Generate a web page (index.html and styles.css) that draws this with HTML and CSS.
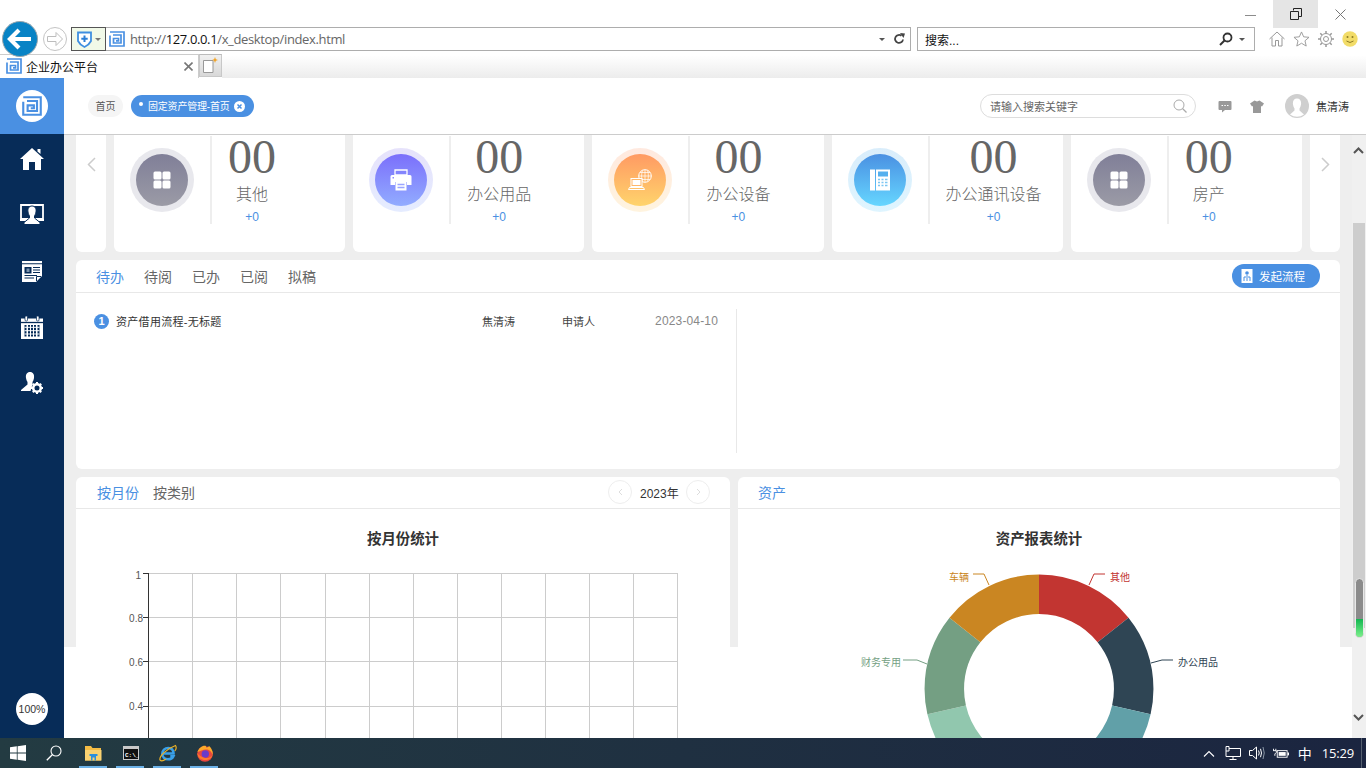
FILE: index.html
```html
<!DOCTYPE html>
<html lang="zh-CN">
<head>
<meta charset="utf-8">
<title>企业办公平台</title>
<link rel="stylesheet" href="styles.css">
</head>
<body>
<svg class="defs" width="0" height="0" aria-hidden="true">
  <symbol id="logo" viewBox="0 0 16 16">
    <path d="M1 1H15V15H1V4.500M4 4H12V12H4.500V7.500H9.500V9.800H7" fill="none" stroke="currentColor" stroke-width="1.700"/>
  </symbol>
  <symbol id="tiles" viewBox="0 0 18 18">
    <rect x="0.500" y="0.500" width="8" height="8" rx="1.500" fill="#fff"/><rect x="9.500" y="0.500" width="8" height="8" rx="1.500" fill="#fff"/>
    <rect x="0.500" y="9.500" width="8" height="8" rx="1.500" fill="#fff"/><rect x="9.500" y="9.500" width="8" height="8" rx="1.500" fill="#fff"/>
  </symbol>
</svg>

<header class="browser">
  <div class="titlebar">
    <div class="winbtn"><svg width="11" height="11" viewBox="0 0 11 11"><path d="M0 6.500H11" stroke="#8c8c8c"/></svg></div>
    <div class="winbtn winbtn-on"><svg width="12" height="12" viewBox="0 0 12 12"><path d="M3.500 2.500V.5H11.500V8.500H9M.5 3.500H8.500V11.500H.5Z" fill="none" stroke="#222"/></svg></div>
    <div class="winbtn"><svg width="11" height="11" viewBox="0 0 11 11"><path d="M.5.5L10.500 10.500M10.500.5L.5 10.500" stroke="#777"/></svg></div>
  </div>
  <div class="addressrow">
    <div class="backbtn"><svg width="26" height="22" viewBox="0 0 26 22"><path d="M12 2L3 11L12 20M4 11H24" fill="none" stroke="#fff" stroke-width="4.200"/></svg></div>
    <div class="fwdbtn"><svg width="18" height="16" viewBox="0 0 18 16"><path d="M10 1.500L16.500 8L10 14.500V10.500H1.500V5.500H10Z" fill="none" stroke="#bdbdbd"/></svg></div>
    <div class="addr">
      <div class="shield">
        <svg width="15" height="17" viewBox="0 0 15 17"><path d="M1 1.500H14V10Q12 14 7.500 16Q3 14 1 10Z" fill="#fff" stroke="#3f8fe0" stroke-width="1.800"/><path d="M7.500 4.500V11M4.300 7.700H10.700" stroke="#2c7fd6" stroke-width="2"/></svg>
        <span class="caret"></span>
      </div>
      <svg class="favicon" width="16" height="16"><use href="#logo"/></svg>
      <span class="url"><span class="url-dim">http://</span>127.0.0.1<span class="url-dim">/x_desktop/index.html</span></span>
      <span class="caret caret-dark addr-caret"></span>
      <svg class="reload" width="12" height="12" viewBox="0 0 12 12"><path d="M10 6.500A4 4 0 1 1 8.500 2.800" fill="none" stroke="#444" stroke-width="1.800"/><path d="M7 0L12 .5L10.500 5Z" fill="#444"/></svg>
    </div>
    <div class="searchbox">
      <span class="searchbox-text">搜索...</span>
      <svg width="14" height="14" viewBox="0 0 14 14"><circle cx="8.500" cy="5.500" r="4" fill="none" stroke="#333" stroke-width="1.800"/><path d="M5.500 8.500L1 13" stroke="#333" stroke-width="2"/></svg>
      <span class="caret caret-dark"></span>
    </div>
    <div class="tools">
      <svg width="16" height="16" viewBox="0 0 16 16"><path d="M.5 8L8 1L15.500 8M3 6.500V15H6.500V9.500H9.500V15H13V6.500" fill="none" stroke="#999"/></svg>
      <svg width="17" height="16" viewBox="0 0 18 17"><path d="M9 1L11.300 6.200L17 6.700L12.700 10.400L14 16L9 13L4 16L5.300 10.400L1 6.700L6.700 6.200Z" fill="none" stroke="#999"/></svg>
      <svg width="16" height="16" viewBox="0 0 16 16"><circle cx="8" cy="8" r="2.500" fill="none" stroke="#999"/><circle cx="8" cy="8" r="5.500" fill="none" stroke="#999" stroke-width="1"/><path d="M8 0V2.500M8 13.500V16M0 8H2.500M13.500 8H16M2.300 2.300L4 4M12 12L13.700 13.700M2.300 13.700L4 12M12 4L13.700 2.300" stroke="#999" stroke-width="1.500"/></svg>
      <svg width="16" height="16" viewBox="0 0 16 16"><circle cx="8" cy="8" r="7.700" fill="#f2dc68"/><circle cx="5.500" cy="6" r="1" fill="#8d7a24"/><circle cx="10.500" cy="6" r="1" fill="#8d7a24"/><path d="M4.500 10Q8 13 11.500 10" fill="none" stroke="#8d7a24"/></svg>
    </div>
  </div>
  <div class="tabrow">
    <div class="tab">
      <svg class="favicon" width="16" height="16"><use href="#logo"/></svg>
      <span class="tab-title">企业办公平台</span>
      <svg class="tab-x" width="9" height="9" viewBox="0 0 9 9"><path d="M.5.5L8.500 8.500M8.500.5L.5 8.500" stroke="#777" stroke-width="1.600"/></svg>
    </div>
    <div class="newtab">
      <svg width="17" height="17" viewBox="0 0 17 17"><path d="M1.500 3.500H11V15.500H1.500Z" fill="#fff" stroke="#999"/><path d="M13 0L13.800 2.200L16 3L13.800 3.800L13 6L12.200 3.800L10 3L12.200 2.200Z" fill="#f0a020"/></svg>
    </div>
    <div class="tabfill"></div>
  </div>
</header>

<div class="app">
  <nav class="sidebar">
    <div class="side-logo"><span class="side-logo-disc"><svg width="20" height="20"><use href="#logo"/></svg></span></div>
    <div class="side-item"><svg width="24" height="22" viewBox="0 0 24 22"><path d="M12 0L24 11H21V22H15V14H9V22H3V11H0Z" fill="#fff"/><path d="M17.500 1H20.500V6L17.500 3.500Z" fill="#fff"/></svg></div>
    <div class="side-item"><svg width="24" height="22" viewBox="0 0 24 22"><path d="M1 1H23V15H1Z" fill="none" stroke="#fff" stroke-width="1.800"/><path d="M0 15H24V17H0Z" fill="#fff"/><path d="M12 2C15 2 16.500 4.500 16 8C15.700 10 15 11 14.500 12V14L20 18.500V20.500H4V18.500L9.500 14V12C9 11 8.300 10 8 8C7.500 4.500 9 2 12 2Z" fill="#fff" stroke="#072c58" stroke-width="1"/></svg></div>
    <div class="side-item"><svg width="20" height="21" viewBox="0 0 20 21"><path d="M0 0H20V15L14 21H0Z" fill="#fff"/><rect x="2.500" y="6" width="7" height="6.500" fill="#072c58"/><rect x="4.500" y="7.500" width="3" height="3.500" fill="#7c93ad"/><path d="M11 6.500H18M11 9H18M11 11.500H18M2.500 14.500H15M2.500 17H12M0 2.800H20" stroke="#072c58" stroke-width="1.100"/><path d="M14.500 20V15.500H19" fill="none" stroke="#072c58"/></svg></div>
    <div class="side-item"><svg width="22" height="23" viewBox="0 0 22 23"><path d="M0 2.500H22V23H0Z" fill="#fff"/><path d="M0 6.500H22" stroke="#072c58" stroke-width="1.300"/><rect x="4" y="0" width="2.500" height="5" rx="1" fill="#fff" stroke="#072c58" stroke-width=".7"/><rect x="15.500" y="0" width="2.500" height="5" rx="1" fill="#fff" stroke="#072c58" stroke-width=".7"/><path d="M4.500 9V20.500M8 9V20.500M11 9V20.500M14 9V20.500M17.500 9V20.500" stroke="#072c58" stroke-width="2"/><path d="M3.500 11.300H18.500M3.500 14.700H18.500M3.500 18H18.500" stroke="#fff" stroke-width="1"/></svg></div>
    <div class="side-item"><svg width="22" height="22" viewBox="0 0 22 22"><path d="M9 0C12 0 13.500 2.500 13 6C12.700 8 12 9 11.500 10V12.500L9.500 19H0V18L6.500 12.500V10C6 9 5.300 8 5 6C4.500 2.500 6 0 9 0Z" fill="#fff"/><circle cx="16" cy="16" r="3.800" fill="none" stroke="#fff" stroke-width="2.600"/><path d="M16 10V12M16 20V22M10 16H12M20 16H22M11.800 11.800L13.200 13.200M18.800 18.800L20.200 20.200M11.800 20.200L13.200 18.800M18.800 13.200L20.200 11.800" stroke="#fff" stroke-width="2"/></svg></div>
    <div class="side-zoom">100%</div>
  </nav>

  <div class="main">
    <div class="header">
      <span class="crumb">首页</span>
      <span class="crumb crumb-on"><i class="crumb-dot"></i><span class="crumb-text">固定资产管理-首页</span><svg class="crumb-x" width="11" height="11" viewBox="0 0 11 11"><circle cx="5.500" cy="5.500" r="5.500" fill="#fff"/><path d="M3.500 3.500L7.500 7.500M7.500 3.500L3.500 7.500" stroke="#4a90e2" stroke-width="1.500"/></svg></span>
      <div class="h-search">
        <span class="h-search-text">请输入搜索关键字</span>
        <svg width="14" height="14" viewBox="0 0 14 14"><circle cx="6" cy="6" r="5" fill="none" stroke="#aaa"/><path d="M9.500 9.500L13.500 13.500" stroke="#aaa" stroke-width="1.200"/></svg>
      </div>
      <svg class="h-icon" width="14" height="13" viewBox="0 0 14 13"><path d="M1.500 1H12.500A1 1 0 0 1 13.500 2V9A1 1 0 0 1 12.500 10H7L4 12.500V10H1.500A1 1 0 0 1 .5 9V2A1 1 0 0 1 1.500 1Z" fill="#999"/><path d="M3.500 5.500H5M6.300 5.500H7.800M9 5.500H10.500" stroke="#fff" stroke-width="1.200"/></svg>
      <svg class="h-icon h-shirt" width="14" height="13" viewBox="0 0 14 13"><path d="M4.500 0.500L7 1.500L9.500 0.500L14 3.500L12 6.500L11 6V13H3V6L2 6.500L0 3.500Z" fill="#999"/></svg>
      <span class="avatar"><svg width="24" height="24" viewBox="0 0 24 24"><circle cx="12" cy="12" r="12" fill="#cfcfcf"/><path d="M12 4.500C15 4.500 16.500 7 16 10.500C15.700 12.500 15 13.500 14.500 14.500V16.500L19 20.500A12 12 0 0 1 5 20.500L9.500 16.500V14.500C9 13.500 8.300 12.500 8 10.500C7.500 7 9 4.500 12 4.500Z" fill="#fff"/></svg></span>
      <span class="h-name">焦清涛</span>
    </div>

    <div class="content">
      <div class="page">
        <section class="cards">
          <div class="card card-edge"><svg width="9" height="15" viewBox="0 0 9 15"><path d="M8 1L1.500 7.500L8 14" fill="none" stroke="#ccc" stroke-width="1.500"/></svg></div>

          <div class="card">
            <div class="ring ring-grey"><div class="disc disc-grey"><svg width="18" height="18"><use href="#tiles"/></svg></div></div>
            <div class="stat"><div class="stat-in"><span class="stat-num">00</span><span class="stat-label">其他</span><span class="stat-inc">+0</span></div></div>
          </div>

          <div class="card">
            <div class="ring ring-purple"><div class="disc disc-purple"><svg width="22" height="22" viewBox="0 0 22 22"><path d="M5 1H17V6H5Z" fill="none" stroke="#fff" stroke-width="1.300"/><path d="M2 6H20A1.500 1.500 0 0 1 21.500 7.500V16H17V13H5V16H.5V7.500A1.500 1.500 0 0 1 2 6Z" fill="#fff"/><path d="M5.500 13H16.500V21.500H5.500Z" fill="#fff"/><path d="M7.500 15.500H14.500M7.500 18.500H14.500" stroke="#9aa5ff" stroke-width="1.300"/><rect x="2.500" y="8" width="1.500" height="1.500" fill="#8f8cff"/></svg></div></div>
            <div class="stat"><div class="stat-in"><span class="stat-num">00</span><span class="stat-label">办公用品</span><span class="stat-inc">+0</span></div></div>
          </div>

          <div class="card">
            <div class="ring ring-orange"><div class="disc disc-orange"><svg width="24" height="22" viewBox="0 0 24 22"><circle cx="17" cy="7" r="6.300" fill="none" stroke="#fff"/><path d="M10.700 7H23.300M17 .7V13.300M12 3.500H22M12 10.500H22M14.500 1.500C13.300 5 13.300 9 14.500 12.500M19.500 1.500C20.700 5 20.700 9 19.500 12.500" fill="none" stroke="#fff" stroke-width=".7"/><rect x="3" y="9.500" width="11" height="8" fill="#ffb76a" stroke="#fff"/><rect x="4.500" y="11" width="8" height="5" fill="#fff"/><path d="M1.500 18.500H15.500L16.500 20.500H.5Z" fill="none" stroke="#fff"/></svg></div></div>
            <div class="stat"><div class="stat-in"><span class="stat-num">00</span><span class="stat-label">办公设备</span><span class="stat-inc">+0</span></div></div>
          </div>

          <div class="card">
            <div class="ring ring-blue"><div class="disc disc-blue"><svg width="20" height="22" viewBox="0 0 20 22"><rect x="0" y="0.500" width="5" height="21" fill="#fff"/><path d="M6 .5H20V21.500H6Z" fill="#fff"/><rect x="8" y="2.500" width="10" height="5" fill="#55b0ee"/><path d="M8 10.500H10M11.500 10.500H13.500M15 10.500H17.500M8 13.500H10M11.500 13.500H13.500M15 13.500H17.500M8 16.500H10M11.500 16.500H13.500M15 16.500H17.500" stroke="#7cc6f2" stroke-width="1.300"/></svg></div></div>
            <div class="stat"><div class="stat-in"><span class="stat-num">00</span><span class="stat-label">办公通讯设备</span><span class="stat-inc">+0</span></div></div>
          </div>

          <div class="card">
            <div class="ring ring-grey"><div class="disc disc-grey"><svg width="18" height="18"><use href="#tiles"/></svg></div></div>
            <div class="stat"><div class="stat-in"><span class="stat-num">00</span><span class="stat-label">房产</span><span class="stat-inc">+0</span></div></div>
          </div>

          <div class="card card-edge"><svg width="9" height="15" viewBox="0 0 9 15"><path d="M1 1L7.500 7.500L1 14" fill="none" stroke="#ccc" stroke-width="1.500"/></svg></div>
        </section>

        <section class="panel panel-tasks">
          <div class="tabs tabs-tasks">
            <span class="tabs-item tabs-on">待办</span><span class="tabs-item">待阅</span><span class="tabs-item">已办</span><span class="tabs-item">已阅</span><span class="tabs-item">拟稿</span>
            <button class="startbtn"><svg width="12" height="14" viewBox="0 0 12 14"><path d="M.5 0H11.500V14H.5Z" fill="#fff"/><circle cx="6" cy="4" r="1.800" fill="#4a90e2"/><path d="M3 12V8H5M6 6V12M9 12V8H7" fill="none" stroke="#4a90e2"/></svg>发起流程</button>
          </div>
          <div class="tasks-body">
            <div class="tasks-col">
              <div class="task">
                <span class="task-no">1</span>
                <span class="task-title">资产借用流程-无标题</span>
                <span class="task-name">焦清涛</span>
                <span class="task-role">申请人</span>
                <span class="task-date">2023-04-10</span>
              </div>
            </div>
          </div>
        </section>

        <section class="charts">
          <div class="panel chart-left">
            <div class="tabs tabs-chart">
              <span class="tabs-item tabs-on">按月份</span><span class="tabs-item">按类别</span>
              <div class="pager">
                <span class="pager-btn"><svg width="5" height="8" viewBox="0 0 5 8"><path d="M4 1L1 4L4 7" fill="none" stroke="#ddd"/></svg></span>
                <span class="pager-year">2023年</span>
                <span class="pager-btn"><svg width="5" height="8" viewBox="0 0 5 8"><path d="M1 1L4 4L1 7" fill="none" stroke="#ddd"/></svg></span>
              </div>
            </div>
            <svg class="chart" width="654" height="240" viewBox="76 509 654 240">
              <text class="chart-title" x="403" y="544" text-anchor="middle">按月份统计</text>
              <g class="grid">
                <path d="M192.500 573V750M236.500 573V750M280.500 573V750M325.500 573V750M369.500 573V750M413.500 573V750M457.500 573V750M501.500 573V750M545.500 573V750M589.500 573V750M633.500 573V750M677.500 573V750"/>
                <path d="M148 573.500H678M148 617.500H678M148 661.500H678M148 706.500H678"/>
              </g>
              <path class="axis" d="M148.500 573V750M143 573.500H148M143 617.500H148M143 661.500H148M143 706.500H148"/>
              <text class="tick" x="141" y="579" text-anchor="end">1</text>
              <text class="tick" x="143" y="622" text-anchor="end">0.8</text>
              <text class="tick" x="143" y="666" text-anchor="end">0.6</text>
              <text class="tick" x="143" y="710" text-anchor="end">0.4</text>
            </svg>
          </div>
          <div class="panel chart-right">
            <div class="tabs tabs-chart tabs-right">
              <span class="tabs-item tabs-on">资产</span>
            </div>
            <svg class="chart" width="602" height="240" viewBox="738 509 602 240">
              <text class="chart-title" x="1039" y="544" text-anchor="middle">资产报表统计</text>
              <g class="donut" transform="rotate(-90 1039 689)">
                <circle class="seg seg-1" cx="1039" cy="689" r="94.700" pathLength="7"/>
                <circle class="seg seg-2" cx="1039" cy="689" r="94.700" pathLength="7"/>
                <circle class="seg seg-3" cx="1039" cy="689" r="94.700" pathLength="7"/>
                <circle class="seg seg-4" cx="1039" cy="689" r="94.700" pathLength="7"/>
                <circle class="seg seg-5" cx="1039" cy="689" r="94.700" pathLength="7"/>
                <circle class="seg seg-6" cx="1039" cy="689" r="94.700" pathLength="7"/>
                <circle class="seg seg-7" cx="1039" cy="689" r="94.700" pathLength="7"/>
              </g>
              <path class="lead lead-1" d="M1089 585L1094 574H1105"/>
              <path class="lead lead-2" d="M1151 663L1162 660H1173"/>
              <path class="lead lead-6" d="M927 664L917 660H903"/>
              <path class="lead lead-7" d="M989 585L984 574H973"/>
              <text class="pie-text text-1" x="1110" y="581">其他</text>
              <text class="pie-text text-2" x="1178" y="666">办公用品</text>
              <text class="pie-text text-6" x="861" y="666">财务专用</text>
              <text class="pie-text text-7" x="949" y="581">车辆</text>
            </svg>
          </div>
        </section>
      </div>
      <aside class="scrollbar">
        <div class="sb-top"><svg width="11" height="7" viewBox="0 0 11 7"><path d="M1 6L5.500 1.500L10 6" fill="none" stroke="#555" stroke-width="2"/></svg></div>
        <div class="sb-thumb"><div class="sb-meter"><div class="sb-meter-fill"></div></div></div>
        <div class="sb-rest"></div>
        <div class="sb-bottom"><svg width="11" height="7" viewBox="0 0 11 7"><path d="M1 1L5.500 5.500L10 1" fill="none" stroke="#555" stroke-width="2"/></svg></div>
      </aside>
    </div>
  </div>
</div>

<footer class="taskbar">
  <span class="tb-start"><svg width="16" height="16" viewBox="0 0 16 16"><path d="M0 2.300L6.800 1.300V7.600H0ZM7.600 1.200L16 0V7.600H7.600ZM0 8.400H6.800V14.700L0 13.700ZM7.600 8.400H16V16L7.600 14.800Z" fill="#fff"/></svg></span>
  <span class="tb-search"><svg width="16" height="16" viewBox="0 0 16 16"><circle cx="10" cy="6" r="5" fill="none" stroke="#fff" stroke-width="1.100"/><path d="M6.500 9.500L.8 15.200" stroke="#fff" stroke-width="1.300"/></svg></span>
  <span class="tb-app"><svg width="17" height="16" viewBox="0 0 17 16"><path d="M0 1H6L7.500 3H16V15.500H0Z" fill="#f4bc45"/><path d="M0 5H16.500V15.500H0Z" fill="#fad271"/><path d="M6 10.500H11V15.500H9.500V12.500H7.500V15.500H6Z" fill="#2d8fdc"/><rect x="4.500" y="9" width="8" height="2" fill="#2d8fdc"/></svg></span>
  <span class="tb-app"><svg width="16" height="14" viewBox="0 0 16 14"><rect width="16" height="14" fill="#c9c9c9"/><rect x="1" y="3" width="14" height="10" fill="#111"/><text class="cmd-text" x="2" y="10.500">C:\_</text></svg></span>
  <span class="tb-app"><svg width="18" height="18" viewBox="0 0 18 18"><path d="M3.500 9.500H14.500C14.500 6 12.500 4 9.300 4C5.800 4 3.300 6.500 3.300 9.800C3.300 13 5.800 15.300 9 15.300C11.500 15.300 13.300 14.300 14.300 12.300H11.300" fill="none" stroke="#3aa0e8" stroke-width="2.600"/><path d="M1 16C0 13 6 5.500 16.500 1.500C17.500 3 17 5.500 15.800 7M1 16C2.300 17.500 5 16.500 7 15" fill="none" stroke="#eab127" stroke-width="1.200"/></svg></span>
  <span class="tb-app"><svg width="18" height="18" viewBox="0 0 18 18"><circle cx="9" cy="10" r="7.800" fill="#e8483f"/><path d="M1.500 8C3 3.500 7 1 10 2C9.500 3.500 11 4.500 13 2C15.500 4 17.500 8 16.500 11C15.500 7 13 5.500 10 5.500C7 5.500 4 7 1.500 8Z" fill="#fca82a"/><circle cx="9.300" cy="10" r="3.700" fill="#6a3bc8"/><path d="M1.200 9C2 14 5.500 16 9 16C13 16 16 14 16.700 10.500C15 13.500 12 14.500 9 14C6 13.500 3 11.500 1.200 9Z" fill="#ff7a2a"/></svg></span>
  <div class="tray">
    <svg class="tray-chev" width="12" height="7" viewBox="0 0 12 7"><path d="M1 6.500L6 1.500L11 6.500" fill="none" stroke="#fff" stroke-width="1.100"/></svg>
    <svg width="16" height="14" viewBox="0 0 16 14"><path d="M4 2.500H15.500V10.500H1V5M1 .5H4V5H1ZM8 10.500V13M4.500 13.500H11.500" fill="none" stroke="#fff"/></svg>
    <svg width="16" height="14" viewBox="0 0 16 14"><path d="M.5 4.500H3.500L7.500 1V13L3.500 9.500H.5Z" fill="none" stroke="#fff"/><path d="M9.500 4.500Q11 7 9.500 9.500M11.500 2.800Q13.500 7 11.500 11.200" fill="none" stroke="#fff"/><path d="M14 1Q16.500 7 14 13" fill="none" stroke="#8a96a6"/></svg>
    <svg width="16" height="12" viewBox="0 0 17 12"><path d="M.5 1.500V3.500M3 1.500V3.500M0 3.500H3.500V5.500L2 7V9" fill="none" stroke="#fff"/><rect x="4.500" y="3.500" width="10.500" height="7" fill="none" stroke="#fff"/><rect x="6" y="5" width="7.500" height="4" fill="#fff"/><rect x="15.500" y="5.500" width="1.500" height="3" fill="#fff"/></svg>
    <span class="tray-ime">中</span>
    <span class="tray-time">15:29</span>
    <span class="tray-end"></span>
  </div>
</footer>
</body>
</html>
```
FILE: styles.css
```css
* { box-sizing: border-box; }
html, body { margin: 0; padding: 0; }
body {
  width: 1366px; height: 768px; overflow: hidden;
  display: flex; flex-direction: column;
  font-family: "Liberation Sans", "Noto Sans CJK SC", sans-serif;
  color: #333; background: #fff;
}
.defs { position: absolute; }
svg { display: block; flex: none; }

/* browser chrome */
.browser { height: 78px; flex: none; background: #fff; position: relative; z-index: 2; }
.titlebar { height: 27px; display: flex; justify-content: flex-end; padding-right: 3px; }
.winbtn { width: 45px; height: 28px; display: flex; align-items: center; justify-content: center; }
.winbtn-on { background: #e5e5e5; }
.addressrow { height: 24px; display: flex; align-items: center; padding-left: 2px; position: relative; }
.backbtn {
  width: 36px; height: 36px; border-radius: 50%; background: #0883c5; border: 1px solid #9aa7ad;
  display: flex; align-items: center; justify-content: center; flex: none; margin: -6px 0;
}
.fwdbtn {
  width: 24px; height: 24px; border-radius: 50%; border: 1px solid #c4c4c4; background: #fff;
  display: flex; align-items: center; justify-content: center; flex: none; margin-left: 5px;
}
.addr {
  width: 840px; height: 24px; margin-left: 4px; border: 1px solid #adadad; border-left: none;
  display: flex; align-items: center; flex: none; color: #4a90e2;
}
.shield {
  width: 35px; height: 24px; border: 1px solid #555; background: #f1f9e8;
  display: flex; align-items: center; padding-left: 5px; gap: 3px; flex: none;
}
.caret { width: 0; height: 0; border: 3px solid transparent; border-top: 3px solid #777; border-bottom: none; flex: none; }
.caret-dark { border-top-color: #555; }
.favicon { color: #4a90e2; margin-left: 3px; }
.url { margin-left: 5px; font-size: 13px; color: #111; font-family: "Open Sans", "Liberation Sans", sans-serif; letter-spacing: -.36px; }
.url-dim { color: #666; }
.addr-caret { margin-left: auto; }
.reload { margin: 0 5px 0 8px; }
.searchbox {
  width: 338px; height: 24px; margin-left: 6px; border: 1px solid #adadad; flex: none;
  display: flex; align-items: center; padding: 0 9px 0 7px; gap: 6px;
}
.searchbox-text { font-size: 12px; color: #111; margin-right: auto; }
.tools { display: flex; align-items: center; margin-left: 14px; gap: 8px; }
.tabrow { height: 24px; margin-top: 3px; display: flex; }
.tab {
  width: 199px; height: 24px; border: 1px solid #ccc; border-bottom: none; border-left: none; background: #fff;
  display: flex; align-items: center; padding: 0 0 1px 3px; flex: none;
}
.tab-title { font-size: 12px; color: #111; margin-left: 4px; }
.tab-x { margin-left: auto; margin-right: 5px; }
.newtab {
  width: 23px; height: 23px; background: linear-gradient(#f0f0f0, #d8d8d8); border: 1px solid #c8c8c8; border-top-color: #bbb;
  display: flex; align-items: center; justify-content: center; flex: none;
}
.tabfill { flex: 1; background: linear-gradient(#fff 5%, #ececec); }

/* app */
.app { flex: 1; min-height: 0; display: flex; overflow: hidden; }
.sidebar { width: 64px; flex: none; background: #072c58; display: flex; flex-direction: column; align-items: center; gap: 6px; }
.side-logo { width: 64px; height: 56px; background: #4a90e2; display: flex; align-items: center; justify-content: center; margin-bottom: -6px; }
.side-logo-disc { width: 32px; height: 32px; border-radius: 50%; background: #fff; color: #4a90e2; display: flex; align-items: center; justify-content: center; }
.side-item { width: 64px; height: 50px; display: flex; align-items: center; justify-content: center; }
.side-zoom {
  width: 32px; height: 32px; border-radius: 50%; background: #fff; color: #333; font-size: 10.500px;
  display: flex; align-items: center; justify-content: center; margin-top: auto; margin-bottom: 13px;
}
.main { flex: 1; min-width: 0; display: flex; flex-direction: column; }
.header {
  height: 57px; flex: none; background: #fff; border-bottom: 1px solid #ccc;
  display: flex; align-items: center; padding-left: 24px;
}
.crumb {
  height: 22px; width: 35px; padding: 0 0 1px; justify-content: center; border-radius: 11px; background: #f5f5f5; color: #555; font-size: 10px;
  display: flex; align-items: center; margin-right: 8px;
}
.crumb-on { background: #4a90e2; color: #fff; padding: 0 4px 1px 8px; width: 123px; justify-content: flex-start; }
.crumb-dot { width: 4px; height: 4px; border-radius: 50%; background: #fff; margin-right: 5px; margin-top: -3px; flex: none; }
.crumb-text { letter-spacing: -.2px; }
.crumb-x { margin-left: auto; margin-top: 1px; margin-right: 5px; }
.h-search {
  width: 216px; height: 24px; margin-left: auto; border: 1px solid #ddd; border-radius: 12px;
  display: flex; align-items: center; justify-content: space-between; padding: 0 8px 0 9px;
}
.h-search-text { font-size: 11px; color: #666; }
.h-icon { margin-left: 22px; }
.h-shirt { margin-left: 18px; }
.avatar { margin-left: 21px; }
.h-name { font-size: 11px; color: #333; margin-left: 7px; margin-right: 17px; }

.content { flex: 1; min-height: 0; display: flex; }
.page {
  width: 1288px; flex: none; padding: 0 12px; overflow: hidden;
  background: linear-gradient(#eee 0, #eee 512px, #fff 512px);
}
.cards { display: flex; gap: 8px; margin-top: -27px; }
.card {
  flex: 1; min-width: 0; height: 144px; background: #fff; border-radius: 6px;
  display: flex; align-items: center; padding-left: 16px;
}
.card-edge { flex: 0 0 30px; padding: 0 0 32px; justify-content: center; }
.ring { width: 64px; height: 64px; border-radius: 50%; padding: 6px; flex: none; margin-right: 16px; }
.disc { width: 52px; height: 52px; border-radius: 50%; display: flex; align-items: center; justify-content: center; }
.ring-grey { background: #e8e8ed; }
.disc-grey { background: linear-gradient(#807f98, #9b9ba6); }
.ring-purple { background: linear-gradient(#e6e2fb, #e5ecff); }
.disc-purple { background: linear-gradient(#7b6ffb, #92acff); }
.ring-orange { background: linear-gradient(#ffe9df, #fff4df); }
.disc-orange { background: linear-gradient(#ff9a63, #ffd46c); }
.ring-blue { background: linear-gradient(#d9edfb, #dff5ff); }
.disc-blue { background: linear-gradient(#4a90e2, #66d6ff); }
.stat { height: 88px; border-left: 2px solid #eee; padding-left: 16px; }
.stat-in { display: flex; flex-direction: column; align-items: center; min-width: 48px; padding-top: 1px; }
.stat-num { font: 48px/40px "Liberation Serif", serif; color: #666; }
.stat-label { font-size: 16px; line-height: 24px; margin-top: 4px; color: #666; font-weight: 300; font-family: "Noto Sans CJK SC", sans-serif; }
.stat-inc { font-size: 12px; line-height: 18px; margin-top: 3px; color: #4a90e2; }

.panel { background: #fff; border-radius: 6px 6px 0 0; }
.panel-tasks { margin-top: 8px; height: 209px; border-radius: 6px; }
.tabs { display: flex; align-items: center; border-bottom: 1px solid #e8e8e8; font-size: 14px; color: #666; font-family: "Noto Sans CJK SC", sans-serif; }
.tabs-on { color: #4a90e2; }
.tabs-tasks { height: 33px; padding: 0 20px; gap: 20px; }
.tabs-chart { height: 32px; padding: 0 20px 1px 21px; gap: 14px; }
.tabs-right { padding-left: 20px; }
.startbtn {
  margin-left: auto; width: 88px; height: 24px; border: none; border-radius: 12px; background: #4a90e2; color: #fff;
  font: 11.500px "Noto Sans CJK SC", sans-serif; display: flex; align-items: center; padding: 0 0 0 9px; gap: 6px;
}
.tasks-body { padding-top: 16px; }
.tasks-col { width: 661px; height: 144px; border-right: 1px solid #e8e8e8; padding: 0 18px; }
.task { height: 24px; display: flex; align-items: center; font-size: 11px; color: #444; }
.task-no {
  width: 15px; height: 15px; border-radius: 50%; background: #4a90e2; color: #fff; font-size: 11px; font-weight: 700;
  display: flex; align-items: center; justify-content: center; flex: none; margin-right: 7px;
}
.task-title { flex: 0 0 366px; color: #333; letter-spacing: .3px; }
.task-name { flex: 0 0 80px; }
.task-role { flex: 1; }
.task-date { color: #888; font-size: 12px; letter-spacing: .15px; }

.charts { display: flex; gap: 8px; margin-top: 8px; }
.chart-left { flex: 0 0 654px; }
.chart-right { flex: 1; }
.pager { margin-left: auto; display: flex; align-items: center; gap: 8px; }
.pager-btn { width: 24px; height: 24px; border: 1px solid #eee; border-radius: 50%; display: flex; align-items: center; justify-content: center; }
.pager-year { width: 38px; white-space: nowrap; font: 12px "Liberation Sans", "Noto Sans CJK SC", sans-serif; color: #333; }
.chart-title { font: 700 14.400px "Noto Sans CJK SC", sans-serif; fill: #333; }
.grid { fill: none; stroke: #ccc; stroke-width: 1; shape-rendering: crispEdges; }
.axis { fill: none; stroke: #333; stroke-width: 1; shape-rendering: crispEdges; }
.tick { font: 10px "Liberation Sans", sans-serif; fill: #555; }
.seg { fill: none; stroke-width: 39.500; stroke-dasharray: 1 6; }
.seg-1 { stroke: #c23531; }
.seg-2 { stroke: #2f4554; stroke-dashoffset: -1; }
.seg-3 { stroke: #61a0a8; stroke-dashoffset: -2; }
.seg-4 { stroke: #d48265; stroke-dashoffset: -3; }
.seg-5 { stroke: #91c7ae; stroke-dashoffset: -4; }
.seg-6 { stroke: #749f83; stroke-dashoffset: -5; }
.seg-7 { stroke: #ca8622; stroke-dashoffset: -6; }
.lead { fill: none; stroke-width: 1; }
.lead-1 { stroke: #c23531; }
.lead-2 { stroke: #2f4554; }
.lead-6 { stroke: #749f83; }
.lead-7 { stroke: #ca8622; }
.pie-text { font: 10px "Noto Sans CJK SC", sans-serif; }
.text-1 { fill: #c23531; }
.text-2 { fill: #2f4554; }
.text-6 { fill: #749f83; }
.text-7 { fill: #ca8622; }

/* scrollbar */
.scrollbar { width: 14px; flex: none; background: #f0f0f0; display: flex; flex-direction: column; }
.sb-top { height: 88px; padding: 12px 0 0 1px; }
.sb-thumb { height: 405px; width: 12px; margin-left: 1px; background: #cdcdcd; position: relative; }
.sb-meter {
  position: absolute; left: 2px; top: 355px; width: 9px; height: 60px; border-radius: 5px;
  background: #8b8b8b; border: 1px solid #e8e8e8; overflow: hidden; display: flex; flex-direction: column; justify-content: flex-end;
}
.sb-meter-fill { height: 18px; background: linear-gradient(#12b650, #7df08c); }
.sb-rest { flex: 1; }
.sb-bottom { height: 24px; padding-left: 1px; }

/* taskbar */
.taskbar {
  height: 30px; flex: none; display: flex; align-items: center; color: #fff;
  background: linear-gradient(90deg, #233b42, #1b2540);
}
.tb-start { width: 36px; padding-left: 10px; }
.tb-search { width: 39px; padding-left: 10px; }
.tb-app {
  width: 37px; height: 30px; display: flex; align-items: center; justify-content: center; position: relative;
}
.tb-app::after { content: ""; position: absolute; left: 4px; right: 5px; bottom: 0; height: 2px; background: #6cb2e8; }
.cmd-text { font: 700 6px "Liberation Mono", monospace; fill: #fff; }
.tray { margin-left: auto; display: flex; align-items: center; gap: 8px; }
.tray-chev { margin-right: 2px; }
.tray-ime { font: 14px "Noto Sans CJK SC", sans-serif; margin-left: 1px; }
.tray-time { font: 13px "Open Sans", "Liberation Sans", sans-serif; margin-left: 2px; letter-spacing: -.2px; }
.tray-end { width: 1px; height: 30px; background: #55606f; margin: 0 4px 0 -1px; }
```
